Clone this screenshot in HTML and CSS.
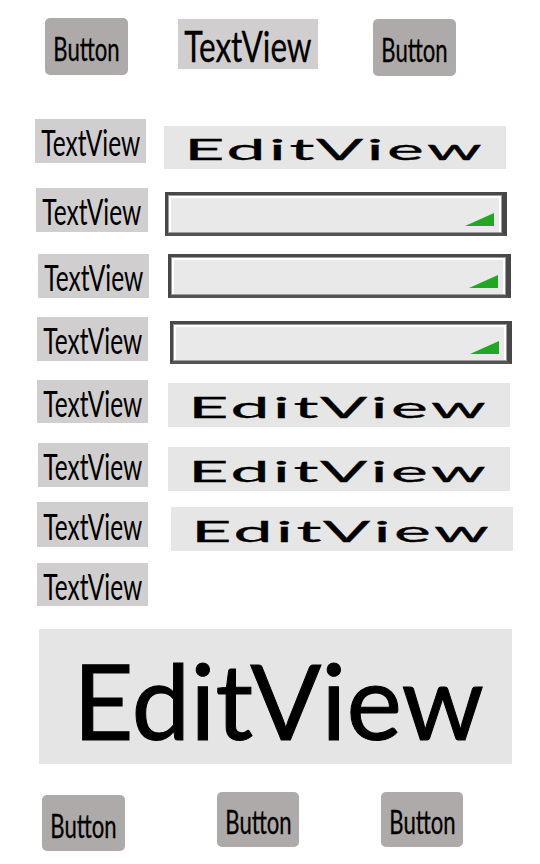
FILE: index.html
```html
<!DOCTYPE html>
<html>
<head>
<meta charset="utf-8">
<link rel="stylesheet" href="styles.css">
</head>
<body>
<div class="screen">
  <div class="row top">
    <div class="btn btn-a"><span class="cond">Button</span></div>
    <div class="tv tv-top"><span class="cond">TextView</span></div>
    <div class="btn btn-b"><span class="cond">Button</span></div>
  </div>

  <div class="row r1">
    <div class="tv tv-1"><span class="cond">TextView</span></div>
    <div class="edit ed-1"><span class="wide">EditView</span></div>
  </div>

  <div class="row r2">
    <div class="tv tv-2"><span class="cond">TextView</span></div>
    <div class="spin sp-2">
      <div class="spin-in">
        <svg class="tri" width="29" height="13" viewBox="0 0 29 13"><path d="M0 13 L29 0 L29 13 Z" fill="#22a722"/></svg>
      </div>
    </div>
  </div>

  <div class="row r3">
    <div class="tv tv-3"><span class="cond">TextView</span></div>
    <div class="spin sp-3">
      <div class="spin-in">
        <svg class="tri" width="29" height="13" viewBox="0 0 29 13"><path d="M0 13 L29 0 L29 13 Z" fill="#22a722"/></svg>
      </div>
    </div>
  </div>

  <div class="row r4">
    <div class="tv tv-4"><span class="cond">TextView</span></div>
    <div class="spin sp-4">
      <div class="spin-in">
        <svg class="tri" width="29" height="13" viewBox="0 0 29 13"><path d="M0 13 L29 0 L29 13 Z" fill="#22a722"/></svg>
      </div>
    </div>
  </div>

  <div class="row r5">
    <div class="tv tv-5"><span class="cond">TextView</span></div>
    <div class="edit ed-5"><span class="wide">EditView</span></div>
  </div>

  <div class="row r6">
    <div class="tv tv-6"><span class="cond">TextView</span></div>
    <div class="edit ed-6"><span class="wide">EditView</span></div>
  </div>

  <div class="row r7">
    <div class="tv tv-7"><span class="cond">TextView</span></div>
    <div class="edit ed-7"><span class="wide">EditView</span></div>
  </div>

  <div class="row r8">
    <div class="tv tv-8"><span class="cond">TextView</span></div>
  </div>

  <div class="big-edit"><span class="big-text">EditView</span></div>

  <div class="row bottom">
    <div class="btn btn-c"><span class="cond">Button</span></div>
    <div class="btn btn-d"><span class="cond">Button</span></div>
    <div class="btn btn-e"><span class="cond">Button</span></div>
  </div>
</div>
</body>
</html>
```

FILE: styles.css
```css
html, body {
  margin: 0;
  padding: 0;
  background: #ffffff;
}

.screen {
  width: 540px;
  height: 864px;
  overflow: hidden;
  font-family: "Lato", "Open Sans", sans-serif;
  color: #000;
  display: flex;
  flex-direction: column;
}

.row {
  display: flex;
  align-items: flex-start;
}

.cond,
.wide,
.big-text {
  display: inline-block;
  white-space: nowrap;
  line-height: 1;
}

.cond {
  transform: scaleX(0.68);
}

.wide {
  font-size: 29px;
  transform: scaleX(2.4);
  letter-spacing: 1.5px;
  -webkit-text-stroke: 0.3px #000;
}

/* Buttons */
.btn {
  box-sizing: border-box;
  width: 83px;
  height: 57px;
  background: #aeaaa9;
  border-radius: 5px;
  display: flex;
  align-items: center;
  justify-content: center;
  padding-top: 4px;
}

.btn .cond {
  font-size: 33px;
  transform: scaleX(0.67);
  -webkit-text-stroke: 0.3px #000;
}

/* TextViews */
.tv {
  box-sizing: border-box;
  width: 111px;
  height: 44px;
  background: #d0cecf;
  display: flex;
  align-items: center;
  justify-content: center;
  padding-top: 2px;
}

.tv .cond {
  font-size: 36px;
}

.tv-top {
  width: 140px;
  height: 50px;
  margin-left: 50px;
  margin-top: 1px;
  padding-top: 4px;
}

.tv-top .cond {
  font-size: 42px;
  transform: scaleX(0.75);
  -webkit-text-stroke: 0.3px #000;
}

/* EditViews */
.edit {
  box-sizing: border-box;
  width: 342px;
  height: 44px;
  background: #e6e6e6;
  display: flex;
  align-items: center;
  justify-content: center;
  padding-top: 2px;
}

/* Spinners */
.spin {
  box-sizing: border-box;
  width: 342px;
  height: 44px;
  border: 3px solid #474747;
  border-right-width: 5px;
  border-bottom-color: #545454;
  background: #e9e9e9;
  box-shadow: inset 0 0 0 1px #9c9c9c;
  padding: 1px;
  display: flex;
}

.spin-in {
  flex: 1;
  border-top: 2px solid #ffffff;
  border-left: 2px solid #ffffff;
  border-right: 2px solid #ffffff;
  display: flex;
  align-items: flex-end;
  justify-content: flex-end;
  padding: 0 5px 6px 0;
}

.tri {
  display: block;
}

/* Big EditView */
.big-edit {
  box-sizing: border-box;
  width: 473px;
  height: 135px;
  margin-top: 23px;
  margin-left: 39px;
  background: #e5e5e5;
  display: flex;
  align-items: center;
  justify-content: center;
  padding-left: 6px;
  padding-top: 6px;
}

.big-text {
  font-size: 105px;
  -webkit-text-stroke: 1px #000;
}

/* Row placement */
.top { margin-top: 18px; }
.btn-a { margin-left: 45px; }
.btn-b { margin-left: 55px; margin-top: 1px; }

.r1 { margin-top: 43px; }
.tv-1 { margin-left: 35px; }
.ed-1 { margin-left: 18px; margin-top: 7px; height: 43px; }

.r2 { margin-top: 19px; }
.tv-2 { margin-left: 36px; width: 112px; }
.sp-2 { margin-left: 17px; margin-top: 4px; }

.r3 { margin-top: 18px; }
.tv-3 { margin-left: 38px; }
.sp-3 { margin-left: 19px; width: 343px; }

.r4 { margin-top: 19px; }
.tv-4 { margin-left: 37px; }
.sp-4 { margin-left: 22px; margin-top: 4px; height: 43px; }

.r5 { margin-top: 16px; }
.tv-5 { margin-left: 37px; height: 43px; }
.ed-5 { margin-left: 20px; margin-top: 3px; }

.r6 { margin-top: 16px; }
.tv-6 { margin-left: 38px; width: 110px; }
.ed-6 { margin-left: 20px; margin-top: 4px; }

.r7 { margin-top: 11px; }
.tv-7 { margin-left: 37px; height: 45px; }
.ed-7 { margin-left: 23px; margin-top: 5px; }

.r8 { margin-top: 12px; }
.tv-8 { margin-left: 37px; height: 43px; }

.bottom { margin-top: 28px; }
.btn-c { margin-left: 42px; margin-top: 3px; height: 56px; }
.btn-d { margin-left: 92px; width: 82px; height: 55px; }
.btn-e { margin-left: 82px; width: 82px; height: 55px; }
```
